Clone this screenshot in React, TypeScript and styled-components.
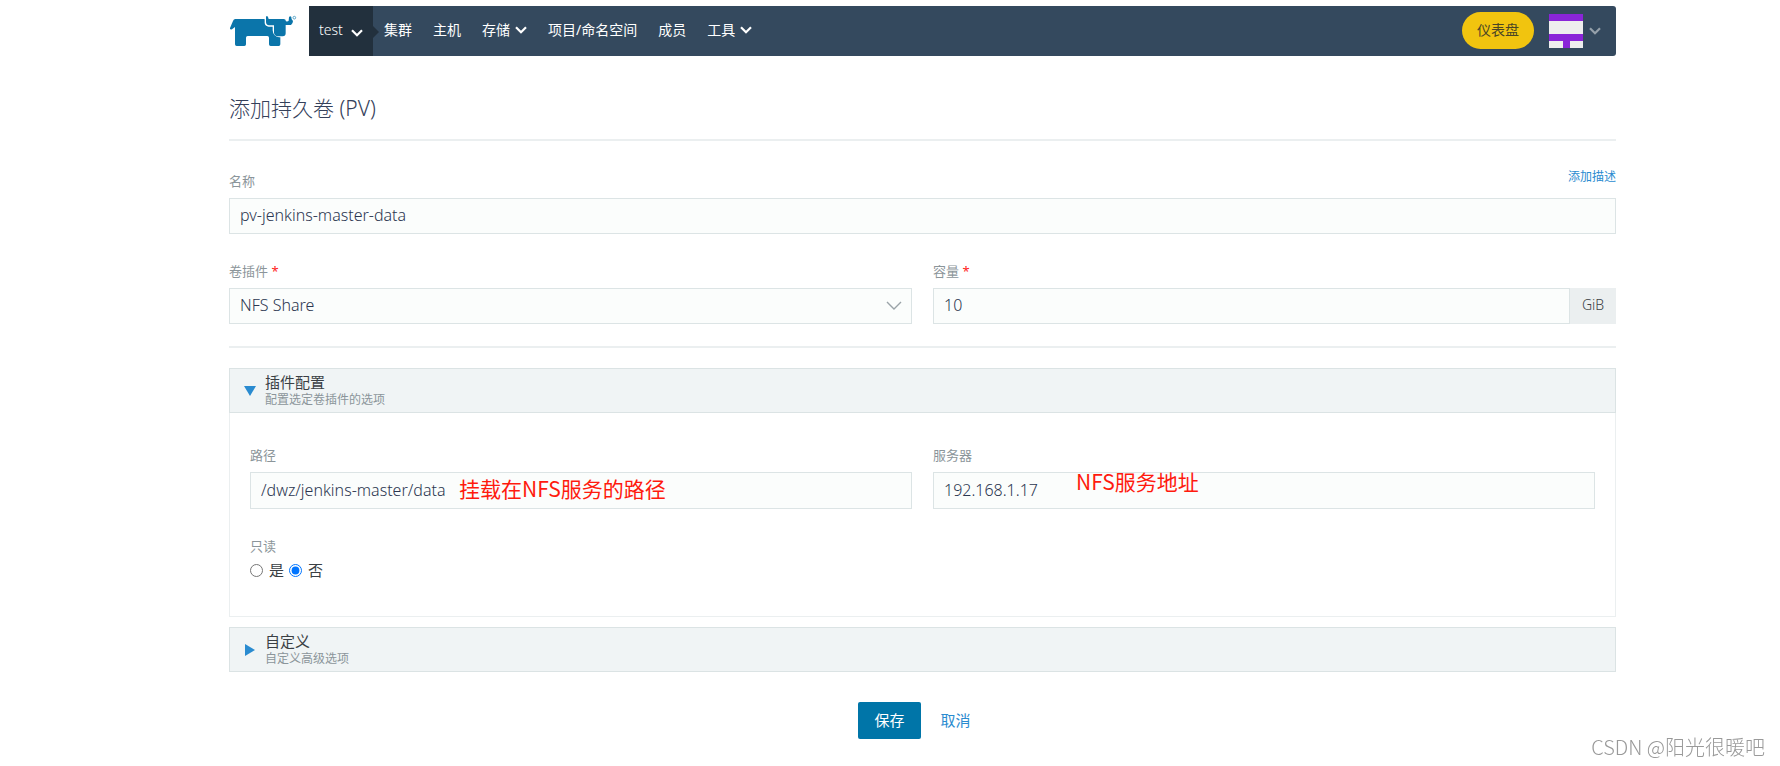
import React from "react";
import styled, { createGlobalStyle } from "styled-components";

const Global = createGlobalStyle`
  *, *::before, *::after { box-sizing: border-box; }
  body {
    margin: 0;
    background: #fff;
    color: #3a3f44;
    font: 400 15px/20px "Noto Sans", "Noto Sans CJK SC", sans-serif;
  }
  button, input, select { font: inherit; color: inherit; }
  a { color: #2a8bd0; text-decoration: none; }
`;

const Page = styled.div`
  padding: 6px 164px 24px 229px;
`;

const Header = styled.header`
  display: flex;
  align-items: center;
  height: 50px;
`;

const LogoLink = styled.a`
  flex: none;
  width: 80px;
  svg { display: block; }
`;

const Bar = styled.nav`
  flex: 1;
  display: flex;
  align-items: center;
  height: 50px;
  padding-right: 15px;
  background: #34495e;
  border-radius: 0 3px 3px 0;
  color: #fff;
  font-size: 14px;
`;

const ClusterButton = styled.button`
  position: relative;
  display: flex;
  align-items: center;
  justify-content: space-between;
  width: 64px;
  height: 50px;
  padding: 0 10px 2px;
  border: 0;
  background: #22303d;
  font-weight: 300;
  &::after {
    content: "";
    position: absolute;
    left: 100%;
    top: 20px;
    border: 6px solid transparent;
    border-right-width: 0;
    border-left-color: #22303d;
  }
  svg { margin-top: 6px; }
`;

const NavLinks = styled.div`
  display: flex;
  flex: 1;
  gap: 21px;
  padding: 0 0 2px 11px;
`;

const NavLink = styled.a`
  display: flex;
  align-items: center;
  gap: 5px;
  color: #fff;
  white-space: nowrap;
`;

const Dashboard = styled.button`
  height: 37px;
  margin-bottom: 1px;
  padding: 0 15px 1px;
  border: 0;
  border-radius: 19px;
  background: #f1c40f;
  color: #4a4526;
`;

const UserButton = styled.button`
  display: flex;
  align-items: center;
  gap: 6px;
  margin-left: 15px;
  padding: 0;
  border: 0;
  background: none;
`;

const Title = styled.h1`
  margin: 37px 0 0;
  padding-bottom: 16px;
  border-bottom: 2px solid #ebeff0;
  color: #34405a;
  font-size: 21px;
  font-weight: 300;
  line-height: 30px;
`;

const Form = styled.form`
  padding-top: 30px;
`;

const Columns = styled.div`
  display: grid;
  grid-template-columns: 1fr 1fr;
  gap: 21px;
`;

const NameRow = styled.div`
  position: relative;
  margin-bottom: 27px;
`;

const DescribeLink = styled.a`
  position: absolute;
  right: 0;
  top: -4px;
  font-size: 12px;
`;

const Label = styled.label`
  display: block;
  margin-bottom: 7px;
  color: #8b959a;
  font-size: 13px;
  sup {
    color: #f22;
    font-size: 13px;
    line-height: 0;
    vertical-align: baseline;
  }
`;

const InputBox = styled.div<{ $tall?: boolean }>`
  position: relative;
  display: flex;
  height: ${(p) => (p.$tall ? 37 : 36)}px;
`;

const Input = styled.input`
  flex: 1;
  min-width: 0;
  padding: 0 10px 2px;
  border: 1px solid #dce4e5;
  border-radius: 0;
  background: #fbfdfc;
  color: #2b3650;
  font-size: 16px;
  font-weight: 300;
`;

const Select = styled.select`
  flex: 1;
  appearance: none;
  padding: 0 10px 2px;
  border: 1px solid #dce4e5;
  border-radius: 0;
  background: #fbfdfc;
  color: #2b3650;
  font-size: 16px;
  font-weight: 300;
`;

const SelectArrow = styled.svg`
  position: absolute;
  right: 10px;
  top: 13px;
  pointer-events: none;
`;

const Unit = styled.span`
  width: 46px;
  background: #ebeff0;
  font-size: 14px;
  font-weight: 300;
  line-height: 34px;
  text-align: center;
`;

const Rule = styled.hr`
  margin: 22px 0 20px;
  border: 0;
  border-top: 2px solid #ebeff0;
`;

const Section = styled.section`
  margin-bottom: 10px;
`;

const SectionHead = styled.button`
  display: flex;
  align-items: center;
  gap: 9px;
  width: 100%;
  height: 45px;
  padding: 0 14px;
  border: 1px solid #dbe3e4;
  background: #f0f4f5;
  text-align: left;
`;

const SectionText = styled.span`
  display: flex;
  flex-direction: column;
`;

const SectionTitle = styled.span`
  line-height: 18px;
`;

const SectionNote = styled.small`
  color: #8b959a;
  font-size: 12px;
  line-height: 17px;
`;

const SectionBody = styled.div`
  padding: 32px 20px 36px;
  border: 1px solid #ebeff0;
  border-top: 0;
`;

const Note = styled.span<{ $left: number; $top: number }>`
  position: absolute;
  left: ${(p) => p.$left}px;
  top: ${(p) => p.$top}px;
  color: #ff1a0e;
  font: 400 21px/30px "Noto Sans CJK SC", sans-serif;
  white-space: nowrap;
`;

const Radios = styled.fieldset`
  margin: 27px 0 0;
  padding: 0;
  border: 0;
`;

const Legend = styled.legend`
  margin-bottom: 4px;
  padding: 0;
  color: #8b959a;
  font-size: 13px;
`;

const RadioRow = styled.div`
  display: flex;
  gap: 5px;
`;

const RadioLabel = styled.label`
  display: flex;
  align-items: center;
  gap: 6px;
  input { width: 13px; height: 13px; margin: 0; }
`;

const Actions = styled.div`
  display: flex;
  justify-content: center;
  gap: 4px;
  padding-top: 20px;
`;

const Action = styled.button<{ $primary?: boolean }>`
  height: 37px;
  padding: 0 16px 2px;
  border: 0;
  border-radius: 2px;
  background: ${(p) => (p.$primary ? "#0075a8" : "transparent")};
  color: ${(p) => (p.$primary ? "#fff" : "#2a8bd0")};
`;

const Watermark = styled.div`
  position: fixed;
  right: 15px;
  bottom: 4px;
  color: #999;
  font: 300 20px/30px "Noto Sans CJK SC", sans-serif;
`;

const Chevron = ({ color = "#fff" }: { color?: string }) => (
  <svg width="12" height="8" viewBox="0 0 12 8" fill="none" aria-hidden="true">
    <path d="M1 1.2 6 6.2 11 1.2" stroke={color} strokeWidth="2.2" />
  </svg>
);

const Triangle = ({ open }: { open?: boolean }) => (
  <svg width="12" height="12" viewBox="0 0 12 12" fill="#2a8bd0" aria-hidden="true">
    <path d={open ? "M0 1H12L6 11Z" : "M1 0V12L11 6Z"} />
  </svg>
);

const Logo = () => (
  <svg width="68" height="32" viewBox="27 45 204 96" fill="#0b75aa" aria-hidden="true">
    <path d="M46 57H133Q134 57 134 61V69Q135 79 146 80H158V91Q159 109 177 112H181V133Q181 138 176 138H152Q147 138 147 133V113Q147 108 142 108H83Q78 108 78 113V133Q78 138 73 138H50Q45 138 45 133V81L36 88Q29 89 30 84L39 63Q41 57 46 57Z" />
    <path d="M138 50Q141 46 144 51L146 57H191Q197 57 198 64Q204 65 206 62L207 52Q210 46 214 51Q213 58 219 63Q219 70 213 75H197V100Q197 109 188 109H174Q163 108 162 98V76H147Q138 75 138 66Z" />
    <circle cx="223" cy="53" r="4" fill="none" stroke="#5aa5c8" strokeWidth="3" />
  </svg>
);

const Avatar = () => (
  <svg width="34" height="34" viewBox="0 0 34 34" aria-hidden="true">
    <rect width="34" height="34" fill="#eee" />
    <path d="M0 0H34V7H0ZM0 20H34V27H21V34H14V27H0Z" fill="#8a25d8" />
  </svg>
);

export default function App() {
  return (
    <>
      <Global />
      <Page>
        <Header>
          <LogoLink href="#" aria-label="Rancher"><Logo /></LogoLink>
          <Bar>
            <ClusterButton type="button">test<Chevron /></ClusterButton>
            <NavLinks>
              <NavLink href="#">集群</NavLink>
              <NavLink href="#">主机</NavLink>
              <NavLink href="#">存储<Chevron /></NavLink>
              <NavLink href="#">项目/命名空间</NavLink>
              <NavLink href="#">成员</NavLink>
              <NavLink href="#">工具<Chevron /></NavLink>
            </NavLinks>
            <Dashboard type="button">仪表盘</Dashboard>
            <UserButton type="button" aria-label="User">
              <Avatar /><Chevron color="#95a0aa" />
            </UserButton>
          </Bar>
        </Header>

        <main>
          <Title>添加持久卷 (PV)</Title>
          <Form>
            <NameRow>
              <Label htmlFor="name">名称</Label>
              <DescribeLink href="#">添加描述</DescribeLink>
              <InputBox><Input id="name" defaultValue="pv-jenkins-master-data" /></InputBox>
            </NameRow>
            <Columns>
              <div>
                <Label htmlFor="plugin">卷插件 <sup>*</sup></Label>
                <InputBox>
                  <Select id="plugin"><option>NFS Share</option></Select>
                  <SelectArrow width="16" height="10" viewBox="0 0 16 10" fill="none">
                    <path d="M1 1 8 8 15 1" stroke="#9aa3a8" strokeWidth="1.4" />
                  </SelectArrow>
                </InputBox>
              </div>
              <div>
                <Label htmlFor="capacity">容量 <sup>*</sup></Label>
                <InputBox>
                  <Input id="capacity" defaultValue="10" />
                  <Unit>GiB</Unit>
                </InputBox>
              </div>
            </Columns>
            <Rule />
            <Section>
              <SectionHead type="button" aria-expanded="true">
                <Triangle open />
                <SectionText>
                  <SectionTitle>插件配置</SectionTitle>
                  <SectionNote>配置选定卷插件的选项</SectionNote>
                </SectionText>
              </SectionHead>
              <SectionBody>
                <Columns>
                  <div>
                    <Label htmlFor="path">路径</Label>
                    <InputBox $tall>
                      <Input id="path" defaultValue="/dwz/jenkins-master/data" />
                      <Note $left={209} $top={1}>挂载在NFS服务的路径</Note>
                    </InputBox>
                  </div>
                  <div>
                    <Label htmlFor="server">服务器</Label>
                    <InputBox $tall>
                      <Input id="server" defaultValue="192.168.1.17" />
                      <Note $left={143} $top={-6}>NFS服务地址</Note>
                    </InputBox>
                  </div>
                </Columns>
                <Radios>
                  <Legend>只读</Legend>
                  <RadioRow>
                    <RadioLabel><input type="radio" name="readonly" />是</RadioLabel>
                    <RadioLabel><input type="radio" name="readonly" defaultChecked />否</RadioLabel>
                  </RadioRow>
                </Radios>
              </SectionBody>
            </Section>
            <Section>
              <SectionHead type="button" aria-expanded="false">
                <Triangle />
                <SectionText>
                  <SectionTitle>自定义</SectionTitle>
                  <SectionNote>自定义高级选项</SectionNote>
                </SectionText>
              </SectionHead>
            </Section>
            <Actions>
              <Action type="button" $primary>保存</Action>
              <Action type="button">取消</Action>
            </Actions>
          </Form>
        </main>
      </Page>
      <Watermark>CSDN @阳光很暖吧</Watermark>
    </>
  );
}
